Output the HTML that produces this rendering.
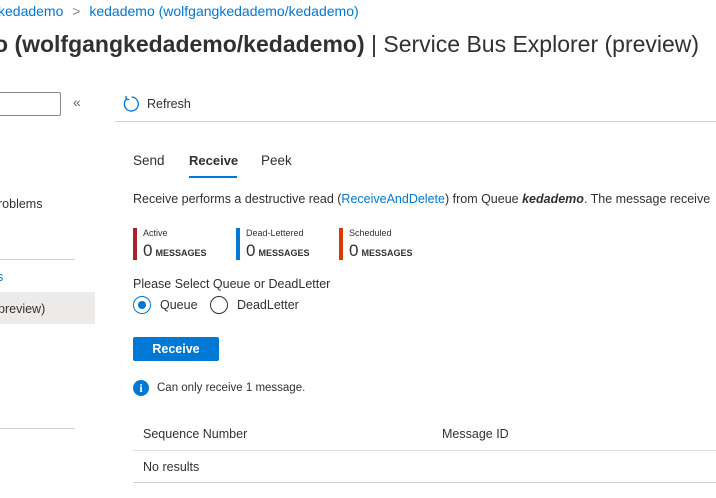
<!DOCTYPE html>
<html><head><meta charset="utf-8"><style>
body{margin:0;width:716px;height:498px;overflow:hidden;background:#fff;font-family:"Liberation Sans",sans-serif;color:#323130;position:relative}
.a{position:absolute;white-space:nowrap}
.blue{color:#0078d4}
.s{font-size:12.5px}
</style></head><body>
<div class="a blue" style="left:-2px;top:3px;font-size:14px">kedademo <span style="color:#8a8886;margin:0 5px">&gt;</span> kedademo (wolfgangkedademo/kedademo)</div>
<div class="a" style="left:-6px;top:31px;font-size:23px"><b>o (wolfgangkedademo/kedademo)</b> | Service Bus Explorer (preview)</div>
<div class="a" style="left:-2px;top:92px;width:61px;height:22px;border:1px solid #8a8886;border-radius:2px"></div>
<div class="a" style="left:73px;top:94px;font-size:14px;color:#605e5c">«</div>
<svg class="a" style="left:122px;top:95px" width="18" height="18" viewBox="0 0 18 18"><path d="M5 3.5A7 7 0 1 0 9.5 2" fill="none" stroke="#0078d4" stroke-width="1.3"/><path d="M4 1v3.5h3.5" fill="none" stroke="#0078d4" stroke-width="1.3"/></svg>
<div class="a s" style="left:147px;top:97px">Refresh</div>
<div class="a" style="left:115px;top:121px;width:601px;height:1px;background:#d2d0ce"></div>
<div class="a s" style="left:-2px;top:197px">roblems</div>
<div class="a" style="left:0;top:259px;width:75px;height:1px;background:#d2d0ce"></div>
<div class="a s blue" style="left:-3px;top:270px">s</div>
<div class="a" style="left:0;top:292px;width:95px;height:32px;background:#edebe9"></div>
<div class="a s" style="left:-2px;top:302px">preview)</div>
<div class="a" style="left:0;top:428px;width:75px;height:1px;background:#d2d0ce"></div>
<div class="a" style="left:133px;top:153px;font-size:13.5px">Send</div>
<div class="a" style="left:189px;top:153px;font-size:13px;font-weight:bold">Receive</div>
<div class="a" style="left:189px;top:176px;width:48px;height:2px;background:#0078d4"></div>
<div class="a" style="left:261px;top:153px;font-size:13.5px">Peek</div>
<div class="a s" style="left:133px;top:192px">Receive performs a destructive read (<span class="blue">ReceiveAndDelete</span>) from Queue <b><i>kedademo</i></b>. The message receive</div>
<div class="a" style="left:133px;top:228px;width:4px;height:32px;background:#a4262c"></div>
<div class="a" style="left:236px;top:228px;width:4px;height:32px;background:#0078d4"></div>
<div class="a" style="left:339px;top:228px;width:4px;height:32px;background:#d83b01"></div>
<div class="a" style="left:143px;top:228px;font-size:9px">Active</div>
<div class="a" style="left:246px;top:228px;font-size:9px">Dead-Lettered</div>
<div class="a" style="left:349px;top:228px;font-size:9px">Scheduled</div>
<div class="a" style="left:143px;top:241px;font-size:17px">0<span style="font-size:9px;font-weight:bold;margin-left:3px">MESSAGES</span></div>
<div class="a" style="left:246px;top:241px;font-size:17px">0<span style="font-size:9px;font-weight:bold;margin-left:3px">MESSAGES</span></div>
<div class="a" style="left:349px;top:241px;font-size:17px">0<span style="font-size:9px;font-weight:bold;margin-left:3px">MESSAGES</span></div>
<div class="a s" style="left:133px;top:277px">Please Select Queue or DeadLetter</div>
<div class="a" style="left:133px;top:296px;width:18px;height:18px;border:1px solid #0078d4;border-radius:50%;box-sizing:border-box"></div>
<div class="a" style="left:138px;top:301px;width:8px;height:8px;background:#0078d4;border-radius:50%"></div>
<div class="a s" style="left:160px;top:298px">Queue</div>
<div class="a" style="left:210px;top:296px;width:18px;height:18px;border:1px solid #323130;border-radius:50%;box-sizing:border-box"></div>
<div class="a s" style="left:237px;top:298px">DeadLetter</div>
<div class="a" style="left:133px;top:337px;width:86px;height:24px;background:#0078d4;border-radius:2px;color:#fff;font-size:12.5px;font-weight:bold;text-align:center;line-height:24px">Receive</div>
<div class="a" style="left:133px;top:380px;width:16px;height:16px;border-radius:50%;background:#0078d4;color:#fff;font-size:12px;font-weight:bold;text-align:center;line-height:16px;font-family:'Liberation Serif',serif">i</div>
<div class="a" style="left:157px;top:382px;font-size:11.5px">Can only receive 1 message.</div>
<div class="a s" style="left:143px;top:427px">Sequence Number</div>
<div class="a s" style="left:442px;top:427px">Message ID</div>
<div class="a" style="left:133px;top:450px;width:583px;height:1px;background:#e1dfdd"></div>
<div class="a s" style="left:143px;top:460px">No results</div>
<div class="a" style="left:133px;top:482px;width:583px;height:1px;background:#d2d0ce"></div>
</body></html>
